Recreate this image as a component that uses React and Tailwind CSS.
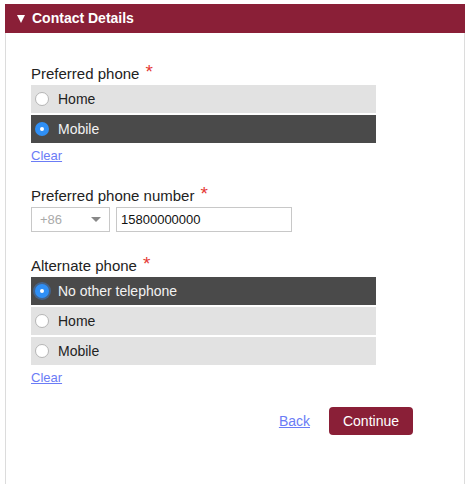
import { useState } from 'react'

function Radio({ checked, focused }) {
  return checked ? (
    <span
      className={`w-[14px] h-[14px] rounded-full bg-[#2f8ff5] flex items-center justify-center shrink-0 ${
        focused ? 'shadow-[0_0_0_2px_rgba(60,130,220,0.45)]' : ''
      }`}
    >
      <span className="w-[4px] h-[4px] rounded-full bg-white" />
    </span>
  ) : (
    <span className="w-[14px] h-[14px] rounded-full bg-white border border-[#b5b5b5] shrink-0" />
  )
}

function Option({ label, checked, focused, onClick }) {
  return (
    <div
      onClick={onClick}
      className={`h-[28px] flex items-center gap-[9px] pl-[4px] text-[14px] cursor-pointer ${
        checked ? 'bg-[#4a4a4a] text-[#f2f2f2]' : 'bg-[#e2e2e2] text-[#222]'
      }`}
    >
      <Radio checked={checked} focused={focused} />
      <span>{label}</span>
    </div>
  )
}

function Label({ children }) {
  return (
    <div className="h-[18px] flex items-start text-[15px] text-[#222] leading-[18px] mb-[2px]">
      <span>{children}</span>
      <span className="ml-[6px] text-[#e53935] text-[19px] leading-[18px] -mt-[2px]">*</span>
    </div>
  )
}

export default function App() {
  const [pref, setPref] = useState('Mobile')
  const [alt, setAlt] = useState('No other telephone')

  return (
    <div className="w-[469px] h-[484px] bg-white pt-[4px] px-[5px] font-['Liberation_Sans',Arial,sans-serif]">
      <div className="w-[460px] h-[480px] border-x border-[#dcdcdc] flex flex-col">
        <div className="h-[29px] bg-[#8a1f37] text-white font-bold text-[14px] flex items-center pl-[12px] gap-[7px] -mx-px">
          <span className="w-0 h-0 border-x-[4.5px] border-x-transparent border-t-[8px] border-t-white" />
          <span>Contact Details</span>
        </div>

        <div className="pl-[25px] pr-[88px] pt-[32px]">
          <Label>Preferred phone</Label>
          <div className="flex flex-col gap-[2px]">
            {['Home', 'Mobile'].map((o) => (
              <Option key={o} label={o} checked={pref === o} onClick={() => setPref(o)} />
            ))}
          </div>
          <a href="#" className="inline-block text-[13px] leading-[15px] text-[#6b7cf6] underline mt-[5px]">Clear</a>

          <div className="mt-[20px]">
            <Label>Preferred phone number</Label>
            <div className="flex gap-[6px] mt-[2px]">
              <div className="w-[79px] h-[25px] border border-[#c8c8c8] flex items-center justify-between px-[8px] text-[13px] text-[#aaa]">
                <span>+86</span>
                <span className="w-0 h-0 border-x-[5px] border-x-transparent border-t-[5px] border-t-[#888]" />
              </div>
              <div className="w-[176px] h-[25px] border border-[#c8c8c8] flex items-center px-[4px] text-[13px] text-[#111]">
                15800000000
              </div>
            </div>
          </div>

          <div className="mt-[25px]">
            <Label>Alternate phone</Label>
            <div className="flex flex-col gap-[2px]">
              {['No other telephone', 'Home', 'Mobile'].map((o) => (
                <Option
                  key={o}
                  label={o}
                  checked={alt === o}
                  focused={o === 'No other telephone'}
                  onClick={() => setAlt(o)}
                />
              ))}
            </div>
            <a href="#" className="inline-block text-[13px] leading-[15px] text-[#6b7cf6] underline mt-[5px]">Clear</a>
          </div>

          <div className="flex justify-end items-center gap-[19px] mt-[18px] mr-[-37px]">
            <a href="#" className="text-[14px] text-[#6b7cf6] underline">Back</a>
            <button className="w-[84px] h-[28px] rounded-[4px] bg-[#8a1f37] text-white text-[14px]">Continue</button>
          </div>
        </div>
      </div>
    </div>
  )
}
